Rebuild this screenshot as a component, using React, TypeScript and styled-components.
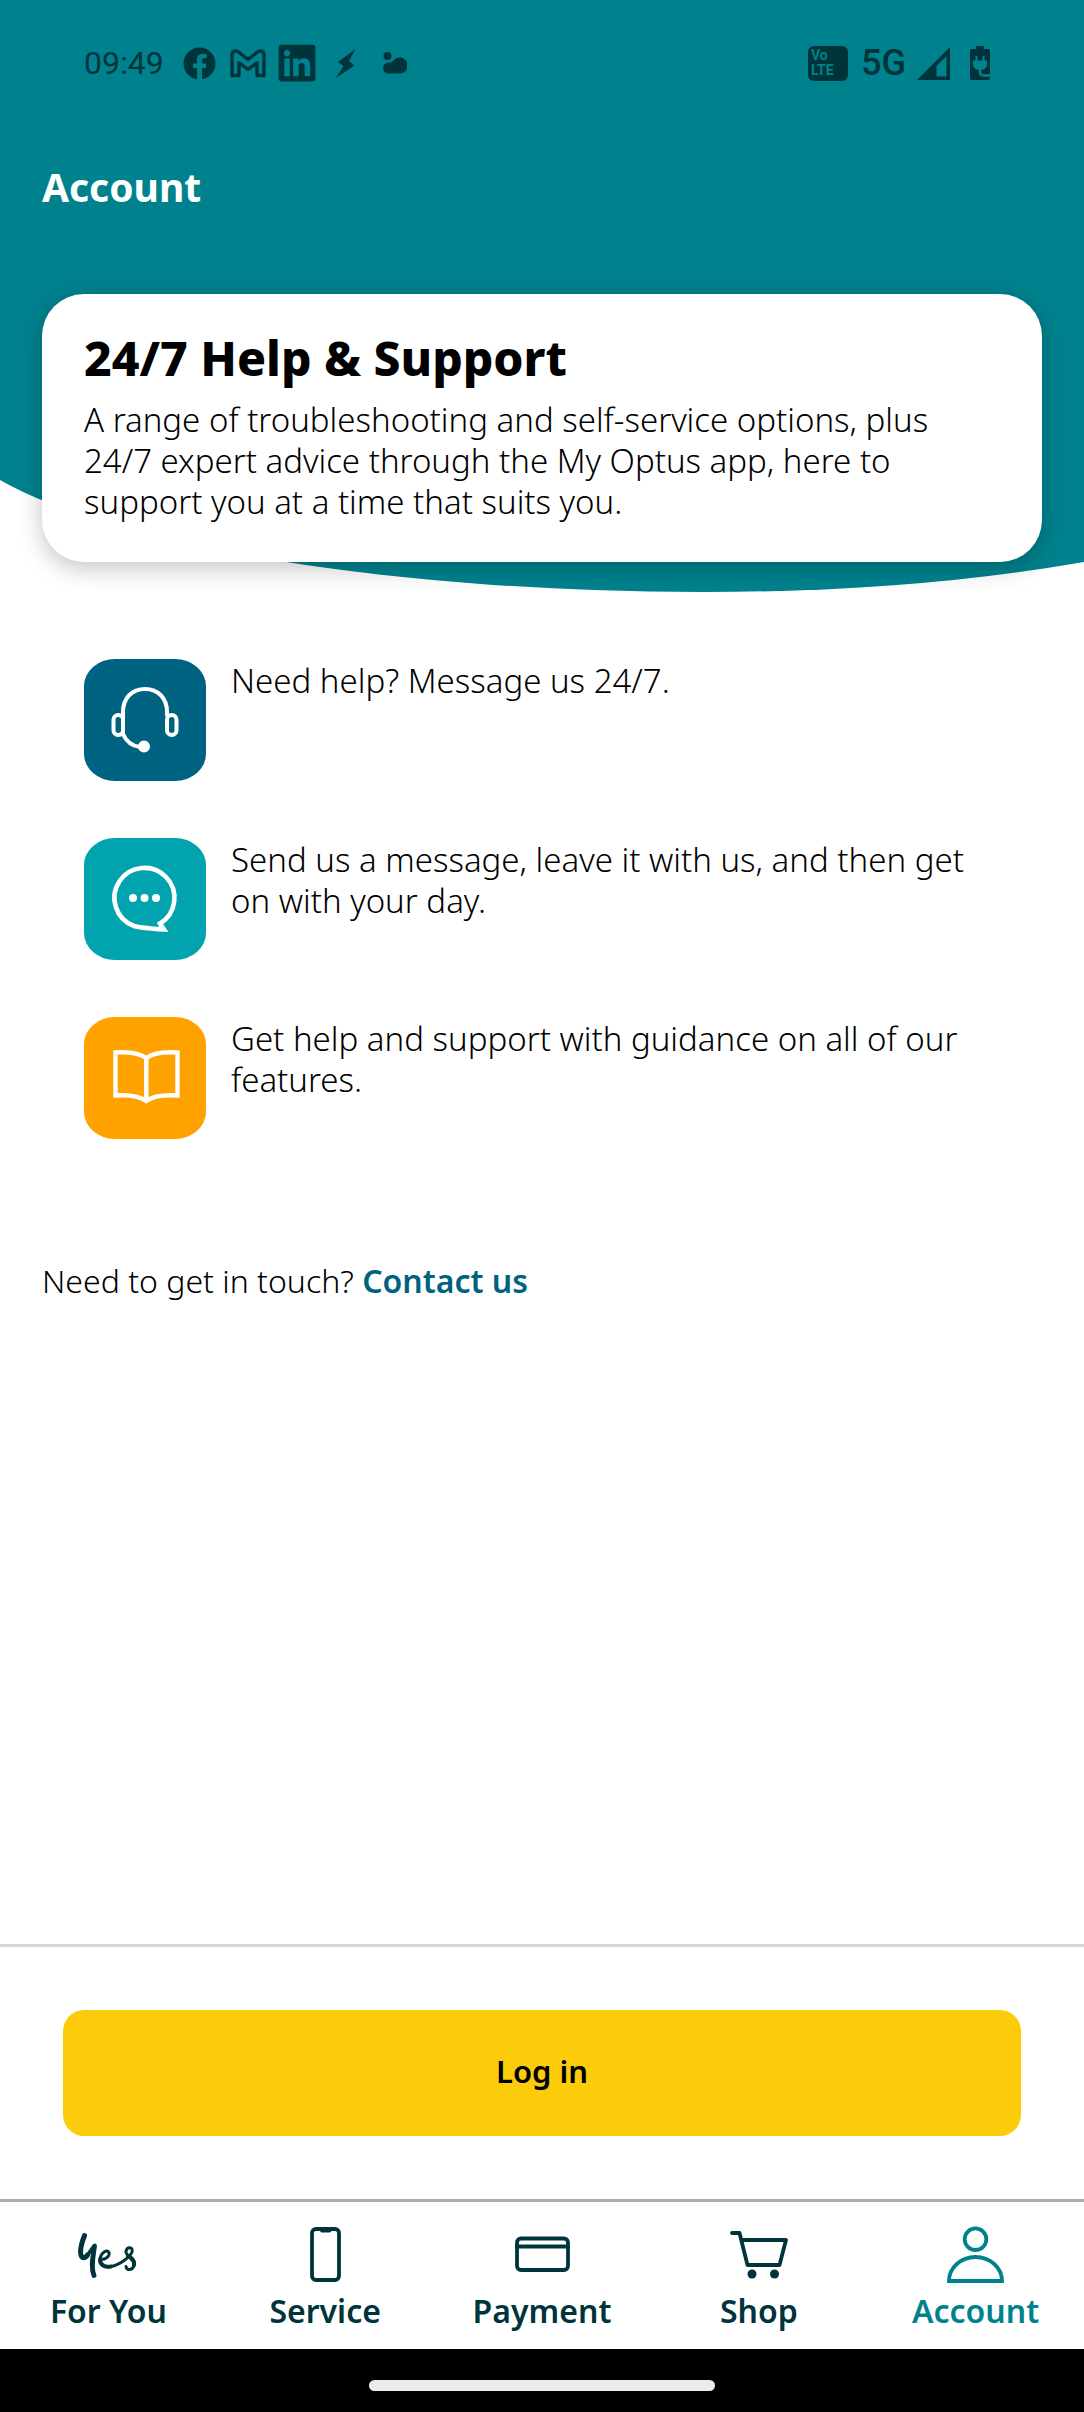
import React from "react";
import styled, { createGlobalStyle } from "styled-components";
import { FaFacebook, FaLinkedin } from "react-icons/fa";

const teal = "#00828e";
const ink = "#00343b";
const blue = "#006281";

const GlobalStyle = createGlobalStyle`
  * { box-sizing: border-box; }
  body {
    margin: 0;
    background: #fff;
    color: #000;
    font-family: "Noto Sans", "Open Sans", sans-serif;
    font-size: 33px;
    font-weight: 300;
    line-height: 41px;
  }
  h1, h2, p, ul { margin: 0; padding: 0; }
  svg { display: block; flex-shrink: 0; }
`;

const Screen = styled.div`
  position: relative;
  display: flex;
  flex-direction: column;
  min-height: 100vh;
`;

const Backdrop = styled.svg`
  position: absolute;
  top: 0;
  left: 0;
  z-index: -1;
  width: 100%;
  height: 592px;
`;

const StatusBar = styled.div`
  display: flex;
  justify-content: space-between;
  align-items: center;
  height: 126px;
  padding: 0 86px 0 84px;
  color: ${ink};
  font-family: Roboto, sans-serif;
  font-weight: 400;
`;

const StatusGroup = styled.div<{ $gap: number }>`
  display: flex;
  align-items: center;
  gap: ${(p) => p.$gap}px;
`;

const StatusSlot = styled.span`
  display: flex;
  justify-content: center;
  width: 37px;
`;

const Clock = styled.span`
  margin-right: 5px;
  font-size: 32px;
`;

const Network = styled.span`
  font-size: 36px;
  font-weight: 500;
`;

const VolteBadge = styled.span`
  display: flex;
  flex-direction: column;
  justify-content: center;
  width: 40px;
  height: 35px;
  margin-right: 4px;
  padding-left: 3px;
  border-radius: 6px;
  background: ${ink};
  color: ${teal};
  font-size: 14px;
  font-weight: 700;
  line-height: 15px;
`;

const Title = styled.h1`
  padding: 34px 42px 80px;
  color: #fff;
  font-size: 39px;
  font-weight: 700;
  line-height: 54px;
`;

const Main = styled.main`
  flex: 1;
  padding: 0 42px 60px;
`;

const Card = styled.section`
  padding: 34px 62px 40px 42px;
  border-radius: 42px;
  background: #fff;
  box-shadow: 0 6px 24px rgba(0, 0, 0, 0.24);
`;

const CardHeading = styled.h2`
  margin-bottom: 11px;
  font-size: 48px;
  font-weight: 800;
  line-height: 60px;
`;

const HelpList = styled.ul`
  display: flex;
  flex-direction: column;
  gap: 57px;
  margin: 97px 42px 121px;
  list-style: none;
`;

const HelpItem = styled.li`
  display: flex;
  gap: 25px;
`;

const HelpText = styled.p`
  padding-top: 1px;
`;

const Tile = styled.span<{ $color: string }>`
  flex-shrink: 0;
  width: 122px;
  height: 122px;
  border-radius: 31px / 27px;
  background: ${(p) => p.$color};
`;

const ContactLine = styled.p`
  font-size: 32px;
`;

const ContactLink = styled.a`
  color: ${blue};
  font-weight: 600;
  text-decoration: none;
`;

const LoginPanel = styled.div`
  padding: 63px;
  border-top: 3px solid #d1d7da;
`;

const LoginButton = styled.button`
  display: block;
  width: 100%;
  height: 126px;
  padding: 0 0 4px;
  border: 0;
  border-radius: 21px;
  background: #fccb0a;
  color: #000;
  font-family: inherit;
  font-size: 31px;
  font-weight: 600;
`;

const TabBar = styled.nav`
  display: flex;
  padding: 23px 0 18px;
  border-top: 3px solid #abaeb1;
`;

const Tab = styled.a<{ $active?: boolean }>`
  display: flex;
  flex: 1;
  flex-direction: column;
  align-items: center;
  gap: 6px;
  color: ${(p) => (p.$active ? teal : ink)};
  font-size: 32px;
  font-weight: 600;
  line-height: 40px;
  text-decoration: none;
`;

const GestureBar = styled.div`
  display: flex;
  justify-content: center;
  align-items: flex-end;
  height: 63px;
  padding-bottom: 21px;
  background: #000;
`;

const GestureHandle = styled.span`
  width: 32%;
  height: 11px;
  border-radius: 6px;
  background: #ebebeb;
`;

const GmailIcon = () => (
  <svg width="36" height="29" viewBox="0 0 36 29" fill="none" stroke="currentColor" strokeWidth="3.4" strokeLinejoin="round">
    <path d="M2 6Q2 2 6 2Q7.500 2 9 3.300L18 10.500L27 3.300Q28.500 2 30 2Q34 2 34 6V26.500H27V13.500L18 20.500L9 13.500V26.500H2Z" />
  </svg>
);

const BoltIcon = () => (
  <svg width="20" height="29" viewBox="0 0 20 29" fill="currentColor">
    <path d="M19.500 0L2 13L7.500 17L0 29L18.500 16.500L13 12Z" />
  </svg>
);

const CloudIcon = () => (
  <svg width="24" height="22" viewBox="0 0 24 22" fill="currentColor">
    <circle cx="4.500" cy="4" r="4" />
    <path d="M5.500 21.500A5.500 5.500 0 0 1 5.500 10.500C8 10.500 9 10.300 10.500 8.500A8 8 0 1 1 16 21.500Z" />
  </svg>
);

const SignalIcon = () => (
  <svg width="33" height="33" viewBox="0 0 33 33" fill="currentColor" fillRule="evenodd">
    <path d="M33 0V33H0ZM29.500 9L19.500 19V29.500H29.500Z" />
  </svg>
);

const BatteryIcon = () => (
  <svg width="20" height="34" viewBox="0 0 20 34">
    <path fill="currentColor" d="M6 0H14V3H18Q20 3 20 5V32Q20 34 18 34H2Q0 34 0 32V5Q0 3 2 3H6Z" />
    <path fill={teal} d="M5.500 10H7.500V14.500H12.500V10H14.500V14.500H17V20L14 23.500H6L3 20V14.500H5.500Z" />
    <path fill="none" stroke={teal} strokeWidth="2.600" d="M10 22V25.500Q10 29.500 14 29.500H20" />
  </svg>
);

const HeadsetIcon = () => (
  <svg width="122" height="122" viewBox="-1 0 122 122" fill="none" stroke="#fff" strokeWidth="4" strokeLinecap="round">
    <path d="M38 76V53C38 39 47 30 60 30S82 39 82 53V56M38 75C41 82 47 87 55 88" />
    <rect x="28.500" y="56" width="9.500" height="20" rx="4.700" />
    <rect x="82" y="56" width="9.500" height="20" rx="4.700" />
    <circle cx="59" cy="87.500" r="4" fill="#fff" />
  </svg>
);

const ChatIcon = () => (
  <svg width="122" height="122" viewBox="-1 0 122 122" fill="none" stroke="#fff" strokeWidth="4.6">
    <path d="M75 85.500A30 30 0 1 0 49 88Q56 90 79 91.500Z" />
    <g fill="#fff" stroke="none">
      <circle cx="48" cy="60" r="4" />
      <circle cx="59.500" cy="60" r="4" />
      <circle cx="71" cy="60" r="4" />
    </g>
  </svg>
);

const BookIcon = () => (
  <svg width="122" height="122" viewBox="0 0 122 122" fill="none" stroke="#fff" strokeWidth="4.4">
    <path d="M62.300 41Q52 34 31.500 35.500V78.500Q52 77 62.300 84Q72 77 93.500 78.500V35.500Q72 34 62.300 41ZV84" />
  </svg>
);

const TabSvg = styled.svg.attrs({
  width: 60,
  height: 60,
  viewBox: "0 0 60 60",
  fill: "none",
  stroke: "currentColor",
  strokeWidth: 3.8,
  strokeLinecap: "round",
})``;

const YesLogo = () => (
  <TabSvg strokeLinejoin="round">
    <path strokeWidth="5" d="M6.500 10.500C4 17 2 25 2.800 29C3.500 34 7 33.500 9.500 30" />
    <path strokeWidth="3.600" d="M9 31C12 27 14.500 22 16.800 20.500" />
    <path strokeWidth="4.800" d="M16.500 21.500C15 32 12.500 42 16 50.500" />
    <path
      strokeWidth="3"
      d="M23 34.500C28 34.500 32 31 31 27.500C29.500 23.500 22.500 28 22 34.500C22 41 28 42.500 33 41.500C42 40 52 32 54 27C55.500 22 49.500 21 48 26C47 31 57 34 56 40C55 45.500 48.500 46 48 41.500"
    />
    <path strokeWidth="4" d="M22 34.500C22 41 28 42.500 33 41.500M50 31C54 33 57 36 56 40" />
  </TabSvg>
);

const PhoneIcon = () => (
  <TabSvg strokeLinejoin="round">
    <rect x="17" y="4" width="27" height="51" rx="4" />
    <path d="M27 5.500H34.500" />
  </TabSvg>
);

const CardIcon = () => (
  <TabSvg strokeLinejoin="round">
    <rect x="5" y="13.500" width="51" height="31.500" rx="4" />
    <path d="M5 21.500H56" />
  </TabSvg>
);

const CartIcon = () => (
  <TabSvg strokeLinejoin="round">
    <path d="M3 8H10.500L18.500 40H50.500L57 15H12.500" />
    <circle cx="23" cy="49" r="4.500" fill="currentColor" stroke="none" />
    <circle cx="45.500" cy="49" r="4.500" fill="currentColor" stroke="none" />
  </TabSvg>
);

const PersonIcon = () => (
  <TabSvg strokeLinejoin="miter">
    <circle cx="29.500" cy="14.200" r="10.800" />
    <path d="M3 56A26.500 24 0 0 1 56 56Z" />
  </TabSvg>
);

const helpItems = [
  { color: blue, icon: <HeadsetIcon />, text: "Need help? Message us 24/7." },
  { color: "#00a3ae", icon: <ChatIcon />, text: "Send us a message, leave it with us, and then get on with your day." },
  { color: "#ffa200", icon: <BookIcon />, text: "Get help and support with guidance on all of our features." },
];

const tabs = [
  { label: "For You", icon: <YesLogo /> },
  { label: "Service", icon: <PhoneIcon /> },
  { label: "Payment", icon: <CardIcon /> },
  { label: "Shop", icon: <CartIcon /> },
  { label: "Account", icon: <PersonIcon />, active: true },
];

const notifications = [
  { name: "facebook", icon: <FaFacebook size={33} /> },
  { name: "gmail", icon: <GmailIcon /> },
  { name: "linkedin", icon: <FaLinkedin size={42} /> },
  { name: "bolt", icon: <BoltIcon /> },
  { name: "cloud", icon: <CloudIcon /> },
];

export default function App() {
  return (
    <Screen>
      <GlobalStyle />
      <Backdrop viewBox="0 0 1084 592" preserveAspectRatio="none" aria-hidden="true">
        <path fill={teal} d="M0 0H1084V562A689 182 0 0 1 705 592A765 182 0 0 1 0 480Z" />
      </Backdrop>
      <StatusBar>
        <StatusGroup $gap={12}>
          <Clock>09:49</Clock>
          {notifications.map((item) => (
            <StatusSlot key={item.name}>{item.icon}</StatusSlot>
          ))}
        </StatusGroup>
        <StatusGroup $gap={9}>
          <VolteBadge>
            <span>Vo</span>
            <span>LTE</span>
          </VolteBadge>
          <Network>5G</Network>
          <StatusSlot>
            <SignalIcon />
          </StatusSlot>
          <StatusSlot>
            <BatteryIcon />
          </StatusSlot>
        </StatusGroup>
      </StatusBar>
      <Title>Account</Title>
      <Main>
        <Card>
          <CardHeading>24/7 Help &amp; Support</CardHeading>
          <p>
            A range of troubleshooting and self-service options, plus 24/7 expert advice through the My Optus app, here
            to support you at a time that suits you.
          </p>
        </Card>
        <HelpList>
          {helpItems.map((item) => (
            <HelpItem key={item.text}>
              <Tile $color={item.color}>{item.icon}</Tile>
              <HelpText>{item.text}</HelpText>
            </HelpItem>
          ))}
        </HelpList>
        <ContactLine>
          Need to get in touch? <ContactLink href="#contact">Contact us</ContactLink>
        </ContactLine>
      </Main>
      <LoginPanel>
        <LoginButton type="button">Log in</LoginButton>
      </LoginPanel>
      <TabBar>
        {tabs.map((tab) => (
          <Tab key={tab.label} href="#" $active={tab.active} aria-current={tab.active ? "page" : undefined}>
            {tab.icon}
            {tab.label}
          </Tab>
        ))}
      </TabBar>
      <GestureBar>
        <GestureHandle />
      </GestureBar>
    </Screen>
  );
}
